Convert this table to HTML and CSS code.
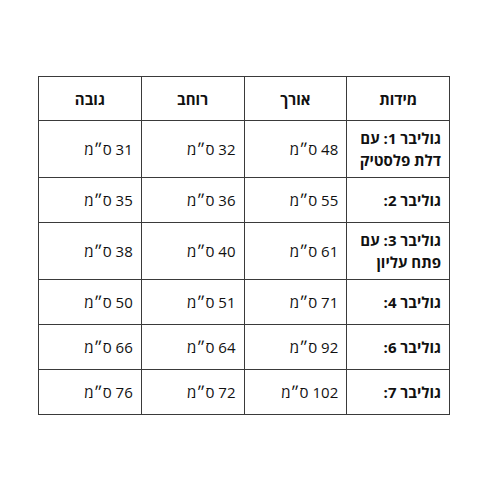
FILE: index.html
```html
<!DOCTYPE html>
<html lang="he" dir="rtl">
<head>
<meta charset="utf-8">
<link rel="stylesheet" href="styles.css">
</head>
<body>
<div class="page">
<table class="sizes">
  <thead>
    <tr><th>מידות</th><th>אורך</th><th>רוחב</th><th>גובה</th></tr>
  </thead>
  <tbody>
    <tr><td class="name">גוליבר 1: עם דלת פלסטיק</td><td>48 ס״מ</td><td>32 ס״מ</td><td>31 ס״מ</td></tr>
    <tr><td class="name">גוליבר 2:</td><td>55 ס״מ</td><td>36 ס״מ</td><td>35 ס״מ</td></tr>
    <tr><td class="name">גוליבר 3: עם פתח עליון</td><td>61 ס״מ</td><td>40 ס״מ</td><td>38 ס״מ</td></tr>
    <tr><td class="name">גוליבר 4:</td><td>71 ס״מ</td><td>51 ס״מ</td><td>50 ס״מ</td></tr>
    <tr><td class="name">גוליבר 6:</td><td>92 ס״מ</td><td>64 ס״מ</td><td>66 ס״מ</td></tr>
    <tr><td class="name">גוליבר 7:</td><td>102 ס״מ</td><td>72 ס״מ</td><td>76 ס״מ</td></tr>
  </tbody>
</table>
</div>
</body>
</html>
```
FILE: styles.css
```css
html, body {
  margin: 0;
  padding: 0;
  background: #fff;
}
.page {
  direction: ltr;
  padding: 76px 0 0 38px;
}
.sizes {
  direction: rtl;
  width: 412px;
  border-collapse: collapse;
  table-layout: fixed;
  font-family: "Open Sans", "Liberation Sans", "DejaVu Sans", sans-serif;
  font-size: 15px;
  color: #111;
  border: 1.5px solid #333;
}
.sizes th, .sizes td {
  border: 1px solid #3a3a3a;
  padding: 6px 8px;
  line-height: 22px;
}
.sizes th {
  height: 31px;
  font-weight: 700;
  text-align: center;
}
.sizes td {
  height: 32px;
  text-align: right;
  font-weight: 400;
  vertical-align: middle;
}
.sizes td.name {
  font-weight: 700;
}
```
